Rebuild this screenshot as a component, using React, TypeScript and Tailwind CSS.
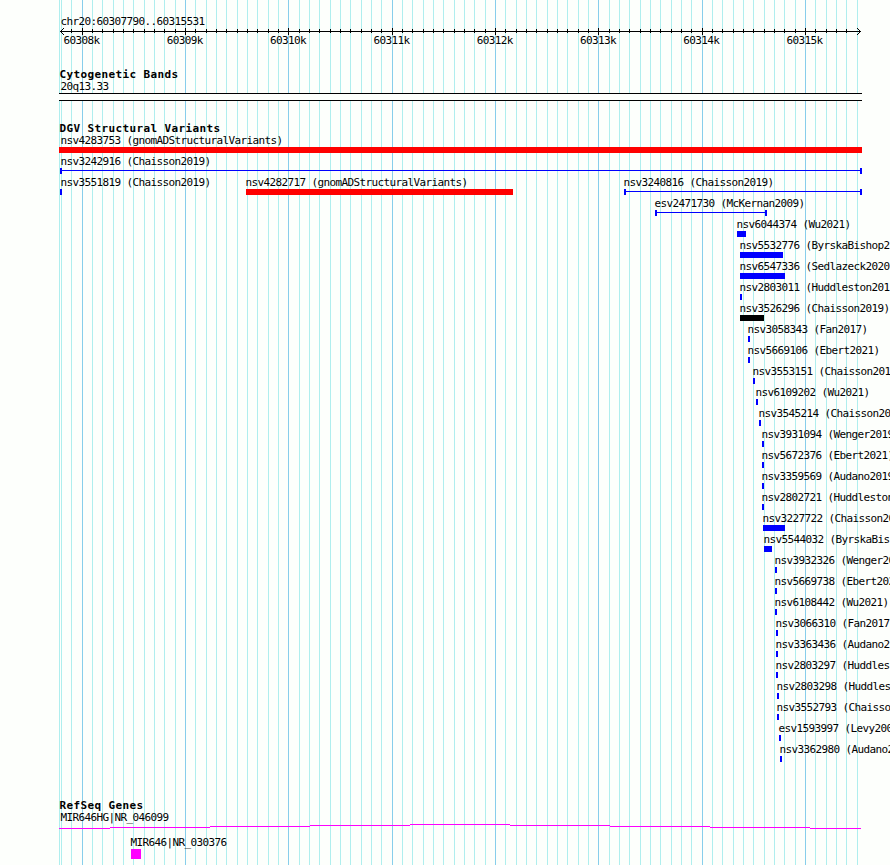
import React from "react";

interface Feature {
  name: string;
  start: number;
  end: number;
  labelX?: number;
  color?: string;
  type?: "box" | "span";
}

const LEFT = 59;
const RIGHT = 862;
const MINOR_STEP = 10.331;
const FIRST_MAJOR = 82.25;

const ticks = Array.from({ length: 77 }, (_, i) => ({
  x: Math.floor(FIRST_MAJOR + (i - 1) * MINOR_STEP),
  major: (i - 1) % 10 === 0,
}));
const gridTicks = [
  { x: 59, major: false },
  { x: 61, major: false },
  ...ticks,
];

const axisLabels = [
  "60308k",
  "60309k",
  "60310k",
  "60311k",
  "60312k",
  "60313k",
  "60314k",
  "60315k",
];

const variantRows: Feature[][] = [
  [{ name: "nsv4283753 (gnomADStructuralVariants)", start: 59, end: 862, labelX: 61, color: "bg-[#ff0000]" }],
  [{ name: "nsv3242916 (Chaisson2019)", start: 60, end: 862, labelX: 61, type: "span" }],
  [
    { name: "nsv3551819 (Chaisson2019)", start: 60, end: 62, labelX: 61 },
    { name: "nsv4282717 (gnomADStructuralVariants)", start: 246, end: 513, color: "bg-[#ff0000]" },
    { name: "nsv3240816 (Chaisson2019)", start: 624, end: 862, type: "span" },
  ],
  [{ name: "esv2471730 (McKernan2009)", start: 655, end: 767, type: "span" }],
  [{ name: "nsv6044374 (Wu2021)", start: 737, end: 746 }],
  [{ name: "nsv5532776 (ByrskaBishop2", start: 740, end: 783 }],
  [{ name: "nsv6547336 (Sedlazeck2020", start: 740, end: 785 }],
  [{ name: "nsv2803011 (Huddleston201", start: 740, end: 742 }],
  [{ name: "nsv3526296 (Chaisson2019)", start: 740, end: 764, color: "bg-black" }],
  [{ name: "nsv3058343 (Fan2017)", start: 748, end: 750 }],
  [{ name: "nsv5669106 (Ebert2021)", start: 748, end: 750 }],
  [{ name: "nsv3553151 (Chaisson201", start: 753, end: 755 }],
  [{ name: "nsv6109202 (Wu2021)", start: 756, end: 758 }],
  [{ name: "nsv3545214 (Chaisson20", start: 759, end: 761 }],
  [{ name: "nsv3931094 (Wenger2019", start: 762, end: 764 }],
  [{ name: "nsv5672376 (Ebert2021)", start: 762, end: 764 }],
  [{ name: "nsv3359569 (Audano2019", start: 762, end: 764 }],
  [{ name: "nsv2802721 (Huddleston", start: 762, end: 764 }],
  [{ name: "nsv3227722 (Chaisson20", start: 763, end: 785 }],
  [{ name: "nsv5544032 (ByrskaBis", start: 764, end: 772 }],
  [{ name: "nsv3932326 (Wenger20", start: 775, end: 777 }],
  [{ name: "nsv5669738 (Ebert202", start: 775, end: 777 }],
  [{ name: "nsv6108442 (Wu2021)", start: 775, end: 777 }],
  [{ name: "nsv3066310 (Fan2017", start: 776, end: 778 }],
  [{ name: "nsv3363436 (Audano2", start: 776, end: 778 }],
  [{ name: "nsv2803297 (Huddles", start: 776, end: 778 }],
  [{ name: "nsv2803298 (Huddles", start: 777, end: 779 }],
  [{ name: "nsv3552793 (Chaisso", start: 777, end: 779 }],
  [{ name: "esv1593997 (Levy200", start: 779, end: 781 }],
  [{ name: "nsv3362980 (Audano2", start: 780, end: 782 }],
];

const GridLines: React.FC = () => (
  <svg className="absolute inset-0" width="890" height="865" shapeRendering="crispEdges">
    {gridTicks.map((t) => (
      <rect key={t.x} x={t.x} y={0} width={1} height={865} fill={t.major ? "#87ceeb" : "#afeeee"} />
    ))}
  </svg>
);

const Label: React.FC<{ children: React.ReactNode }> = ({ children }) => (
  <span className="block h-[13px] pl-[0.5px] leading-[13px] text-[11px] tracking-[-0.623px] whitespace-pre">
    {children}
  </span>
);

const TrackTitle: React.FC<{ children: React.ReactNode }> = ({ children }) => (
  <h2 className="h-[11px] pl-[59.5px] leading-3 text-[11px] font-bold tracking-[0.377px] whitespace-pre">
    {children}
  </h2>
);

const Axis: React.FC = () => (
  <div className="h-[34px]">
    <svg className="block" width="890" height="8" shapeRendering="crispEdges">
      <rect x={60} y={3} width={801} height={1} />
      {ticks.filter((t) => t.x < 857).map((t) => (
        <rect key={t.x} x={t.x} y={t.major ? 0 : 1} width={1} height={t.major ? 7 : 4} />
      ))}
      {[1, 2, 3].map((d) => (
        <g key={d}>
          <rect x={60 + d} y={3 - d} width={1} height={1} />
          <rect x={60 + d} y={3 + d} width={1} height={1} />
          <rect x={860 - d} y={3 - d} width={1} height={1} />
          <rect x={860 - d} y={3 + d} width={1} height={1} />
        </g>
      ))}
    </svg>
    <div className="flex pl-[63px] -mt-[2px]">
      {axisLabels.map((l) => (
        <div key={l} className="w-[103.3px] shrink-0">
          <Label>{l}</Label>
        </div>
      ))}
    </div>
  </div>
);

const Glyph: React.FC<{ feature: Feature }> = ({ feature }) => {
  const width = feature.end - feature.start;
  if (feature.type === "span") {
    return (
      <div className="flex items-start h-1.5" style={{ width }}>
        <div className="w-0.5 h-1.5 bg-[#0000ff]" />
        <div className="flex-1 h-px mt-0.5 bg-[#0000ff]" />
        <div className="w-0.5 h-1.5 bg-[#0000ff]" />
      </div>
    );
  }
  return <div className={`h-1.5 ${feature.color ?? "bg-[#0000ff]"}`} style={{ width }} />;
};

const VariantRow: React.FC<{ features: Feature[] }> = ({ features }) => (
  <div className="relative h-[21px]">
    {features.map((f) => (
      <div key={f.name} className="absolute top-0" style={{ left: f.start }}>
        <div style={{ marginLeft: (f.labelX ?? f.start) - f.start - 1 }}>
          <Label>{f.name}</Label>
        </div>
        <Glyph feature={f} />
      </div>
    ))}
  </div>
);

const GeneLine: React.FC = () => (
  <svg className="block" width="890" height="5" shapeRendering="crispEdges">
    {[4, 3, 2, 1, 0, 1, 2, 3, 4].map((y, i) => {
      const x = i === 0 ? LEFT : 10 + i * 100;
      const end = i === 8 ? RIGHT - 1 : 110 + i * 100;
      return <rect key={i} x={x} y={y} width={end - x} height={1} fill="#ff00ff" />;
    })}
  </svg>
);

const App: React.FC = () => {
  return (
    <div className="relative w-[890px] h-[865px] overflow-hidden bg-[#fdfffc] text-black font-['DejaVu_Sans_Mono',monospace]">
      <GridLines />
      <div className="relative flex flex-col">
        <div className="h-[28px] pt-[15px] pl-[60px]">
          <Label>chr20:60307790..60315531</Label>
        </div>
        <Axis />

        <section className="h-[54px] pt-[7px]">
          <TrackTitle>Cytogenetic Bands</TrackTitle>
          <div className="pl-[60px]">
            <Label>20q13.33</Label>
          </div>
          <div className="w-[803px] h-2 ml-[59px] border-y border-black bg-[#fdfffc]" />
        </section>

        <section className="h-[677px] pt-[7px]">
          <TrackTitle>DGV Structural Variants</TrackTitle>
          {variantRows.map((row) => (
            <VariantRow key={row[0].name} features={row} />
          ))}
        </section>

        <section className="pt-[7px]">
          <TrackTitle>RefSeq Genes</TrackTitle>
          <div className="pl-[60px]">
            <Label>MIR646HG|NR_046099</Label>
          </div>
          <GeneLine />
          <div className="pt-[7px] pl-[130px]">
            <Label>MIR646|NR_030376</Label>
            <div className="size-2.5 ml-px bg-[#ff00ff]" />
          </div>
        </section>
      </div>
    </div>
  );
};

export default App;
